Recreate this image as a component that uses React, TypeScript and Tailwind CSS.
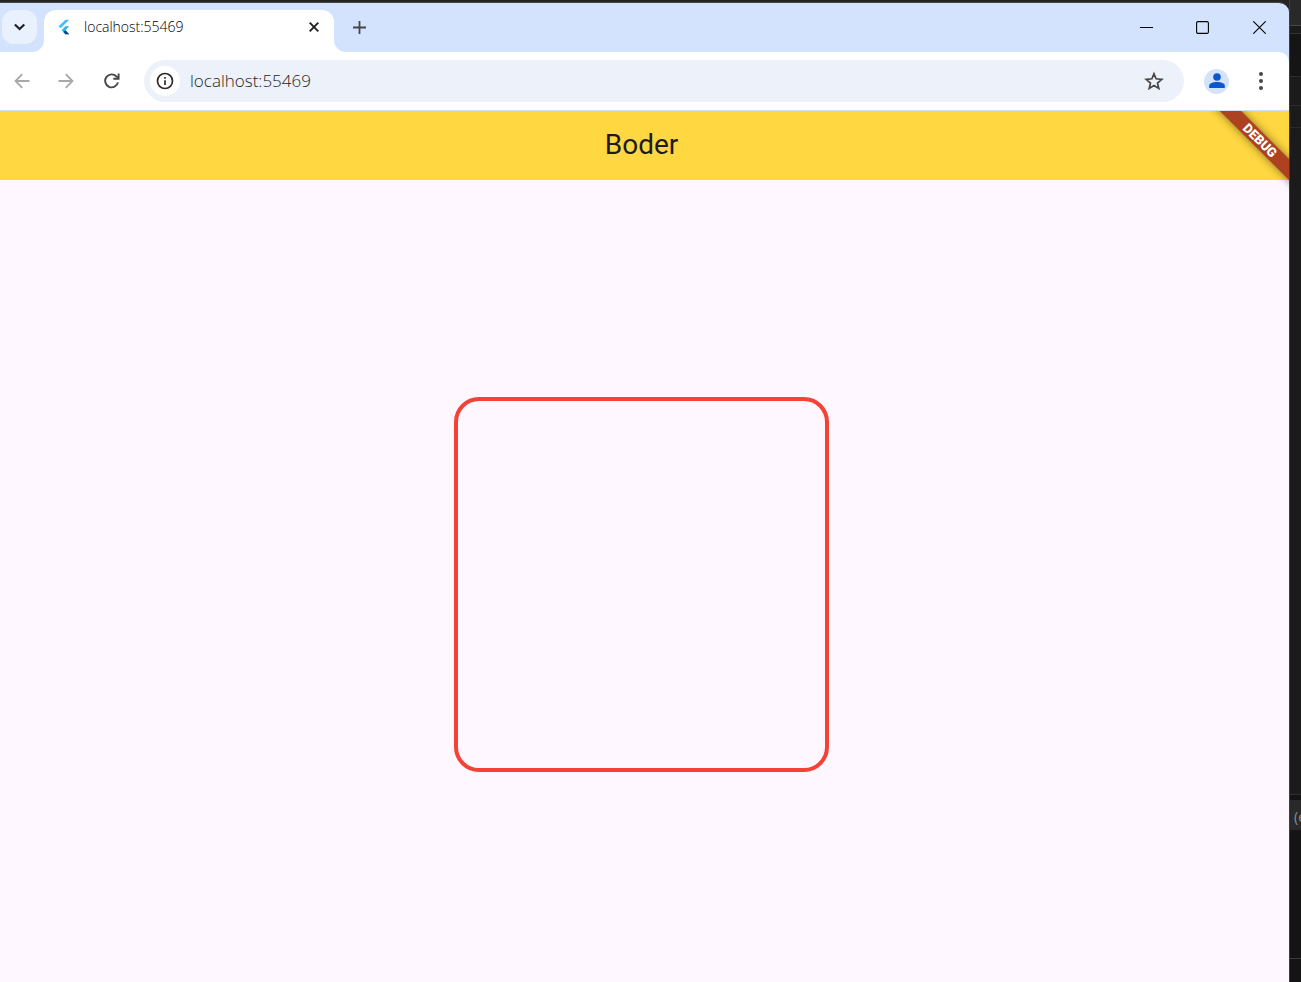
import React from "react";

function FlutterLogo() {
  return (
    <svg viewBox="0 0 12 16" className="h-4 w-3 shrink-0" aria-hidden="true">
      <path d="M7.4 0.8H11.2L2.6 9.2L0.4 7.4Z" fill="#42c0fb" />
      <path d="M7.4 7.2H11.2L7.4 11.2L11.2 15.2H7.4L3.6 11.2Z" fill="#29b6f6" />
      <path d="M5.4 13.1L7.4 11.2L11.2 15.2H7.4Z" fill="#0b3f9e" />
    </svg>
  );
}

function TabStrip() {
  return (
    <div className="flex h-[49px] items-end bg-[#d3e3fd]">
      <div className="flex h-[42px] w-11 shrink-0 items-start pl-0.5">
        <button
          aria-label="Search tabs"
          className="flex h-[34px] w-[35px] items-center justify-center rounded-xl bg-[#eaf1fe]"
        >
          <svg viewBox="0 0 12 8" className="h-2 w-3" fill="none" stroke="#1f1f1f" strokeWidth="2.1">
            <path d="M0.9 1.4L5.6 6.1L10.3 1.4" />
          </svg>
        </button>
      </div>
      <div className="relative flex h-[42px] w-[290px] items-start rounded-t-xl bg-white pr-3 pl-3.5">
        <svg viewBox="0 0 12 12" className="absolute right-full bottom-0 size-3" fill="#fff">
          <path d="M12 0V12H0A12 12 0 0 0 12 0Z" />
        </svg>
        <svg viewBox="0 0 12 12" className="absolute bottom-0 left-full size-3" fill="#fff">
          <path d="M0 0V12H12A12 12 0 0 1 0 0Z" />
        </svg>
        <div className="flex h-[34px] w-full items-center">
          <FlutterLogo />
          <span className="ml-3.5 flex-1 text-sm leading-[18px] font-light text-black">localhost:55469</span>
          <button aria-label="Close tab" className="flex size-4 items-center justify-center">
            <svg viewBox="0 0 10 10" className="size-2.5" fill="none" stroke="#1f1f1f" strokeWidth="1.9">
              <path d="M0.7 0.7L9.3 9.3M9.3 0.7L0.7 9.3" />
            </svg>
          </button>
        </div>
      </div>
      <div className="flex h-[42px] flex-1 items-start pl-3">
        <button aria-label="New tab" className="flex h-[34px] w-[27px] items-center justify-center">
          <svg viewBox="0 0 13 13" className="size-[13px]" fill="none" stroke="#474747" strokeWidth="1.8">
            <path d="M6.5 0V13M0 6.5H13" />
          </svg>
        </button>
      </div>
      <div className="flex h-[42px] items-start">
        <button aria-label="Minimize" className="flex h-[35px] w-14 items-center justify-center">
          <svg viewBox="0 0 13 13" className="size-[13px]" fill="none" stroke="#000">
            <path d="M0 6.5H13" />
          </svg>
        </button>
        <button aria-label="Maximize" className="flex h-[35px] w-14 items-center justify-center">
          <svg viewBox="0 0 13 13" className="size-[13px]" fill="none" stroke="#000" strokeWidth="1.1">
            <rect x="0.6" y="0.6" width="11.8" height="11.8" rx="1.4" />
          </svg>
        </button>
        <button aria-label="Close" className="flex h-[35px] w-[59px] items-center justify-center">
          <svg viewBox="0 0 13 13" className="size-[13px]" fill="none" stroke="#000" strokeWidth="1.1">
            <path d="M0.3 0.3L12.7 12.7M12.7 0.3L0.3 12.7" />
          </svg>
        </button>
      </div>
    </div>
  );
}

function Toolbar() {
  return (
    <div className="bg-[#d3e3fd]">
      <div className="flex h-[59px] items-center rounded-tr-[10px] border-b border-[#d5dfea] bg-white">
        <button aria-label="Back" className="flex h-9 w-11 items-center justify-center">
          <svg viewBox="0 0 16 16" className="size-4" fill="none" stroke="#a9a9a9" strokeWidth="1.8">
            <path d="M15.5 8H1.8M8.3 1.2L1.5 8L8.3 14.8" />
          </svg>
        </button>
        <button aria-label="Forward" className="flex h-9 w-11 items-center justify-center">
          <svg viewBox="0 0 16 16" className="size-4" fill="none" stroke="#a9a9a9" strokeWidth="1.8">
            <path d="M0.5 8H14.2M7.7 1.2L14.5 8L7.7 14.8" />
          </svg>
        </button>
        <button aria-label="Reload" className="flex h-9 w-[47px] items-center justify-center">
          <svg viewBox="0 0 16 16" className="size-4" fill="none" stroke="#474747" strokeWidth="1.9">
            <path d="M14 9.4A6.5 6.5 0 1 1 12.4 3.4L14.4 5.2" />
            <path d="M14.6 0.6V5.8H9.3" />
          </svg>
        </button>
        <div className="ml-[9px] flex h-[42px] flex-1 items-center rounded-full bg-[#ecf1fa] pr-5 pl-1.5">
          <button
            aria-label="View site information"
            className="flex size-[30px] items-center justify-center rounded-full bg-white"
          >
            <svg viewBox="0 0 18 18" className="size-[18px]" fill="none" stroke="#2b2b2b">
              <circle cx="9" cy="9" r="7.5" strokeWidth="1.7" />
              <path d="M9 8.2V13M9 5V6.7" strokeWidth="1.7" />
            </svg>
          </button>
          <input
            aria-label="Address"
            defaultValue="localhost:55469"
            className="ml-2.5 min-w-0 flex-1 bg-transparent text-[17px] leading-6 font-light text-[#1f1f1f] outline-none"
          />
          <button aria-label="Bookmark this tab" className="flex size-5 items-center justify-center">
            <svg viewBox="0 0 20 20" className="size-5" fill="none" stroke="#474747" strokeWidth="1.7">
              <path d="M10 2.8L12.1 7.8L17.8 8.3L13.5 12L14.8 17.5L10 14.6L5.2 17.5L6.5 12L2.2 8.3L7.9 7.8Z" />
            </svg>
          </button>
        </div>
        <button
          aria-label="Profile"
          className="ml-5 flex size-[25px] items-center justify-center rounded-full bg-[#d3e3fd]"
        >
          <svg viewBox="0 0 16 16" className="size-4" fill="#0b57d0">
            <circle cx="8" cy="4" r="3.8" />
            <path d="M0.2 15V12.6C0.2 10.3 4 9 8 9S15.8 10.3 15.8 12.6V15Z" />
          </svg>
        </button>
        <button aria-label="Menu" className="mr-5 ml-6 flex h-9 w-4 items-center justify-center">
          <svg viewBox="0 0 4 18" className="h-[18px] w-1" fill="#474747">
            <circle cx="2" cy="2" r="2" />
            <circle cx="2" cy="9" r="2" />
            <circle cx="2" cy="16" r="2" />
          </svg>
        </button>
      </div>
    </div>
  );
}

function DebugBanner() {
  return (
    <div className="absolute top-0 right-0 size-24 overflow-hidden">
      <div className="absolute top-[22px] left-[7px] h-[15px] w-[120px] rotate-45 bg-[#ad4120] text-center font-[Roboto,sans-serif] text-[13px] leading-[15px] font-black text-white shadow-[0_0_8px_rgba(0,0,0,0.5)]">
        DEBUG
      </div>
    </div>
  );
}

function Page() {
  return (
    <div className="relative flex flex-1 flex-col bg-[#fef7ff]">
      <header className="flex h-[69px] items-center justify-center bg-[#ffd740] pr-1.5 pb-0.5">
        <h1 className="font-[Roboto,sans-serif] text-[28px] leading-9 text-[#1d1b20]">Boder</h1>
      </header>
      <DebugBanner />
      <main className="flex flex-1 items-center justify-center pt-[7px] pr-1.5">
        <div className="size-[375px] rounded-[25px] border-4 border-[#f44336]" />
      </main>
    </div>
  );
}

function EditorEdge() {
  return (
    <aside className="flex w-3 shrink-0 flex-col overflow-hidden border-l border-[#3c3c3f] bg-[#1b1b1b]">
      <div className="h-[26px] border-b border-[#474747] bg-[#292929]" />
      <div className="h-2 border-b border-[#333]" />
      <div className="h-[43px] border-b border-[#2b2b2b] bg-[#151515]" />
      <div className="h-[29px] border-b border-[#2b2b2b]" />
      <div className="h-[22px] border-b border-[#2b2b2b]" />
      <div className="flex-1 border-b border-[#2f2f2f]" />
      <div className="h-[5px] bg-[#141414]" />
      <div className="h-[30px] bg-[#292929] pl-1 text-sm leading-[34px] text-[#8a8f96]">(e</div>
      <div className="h-[129px] border-b border-[#3a3a3a] bg-[#141414]" />
      <div className="h-[23px] bg-[#141414]" />
    </aside>
  );
}

export default function App() {
  return (
    <div className="flex min-h-screen bg-[#242424] font-['Open_Sans',sans-serif]">
      <div className="flex min-w-0 flex-1 flex-col pt-0.5">
        <div className="flex flex-1 flex-col overflow-hidden rounded-tr-[10px] border-t border-[#474747]">
          <TabStrip />
          <Toolbar />
          <Page />
        </div>
      </div>
      <EditorEdge />
    </div>
  );
}
